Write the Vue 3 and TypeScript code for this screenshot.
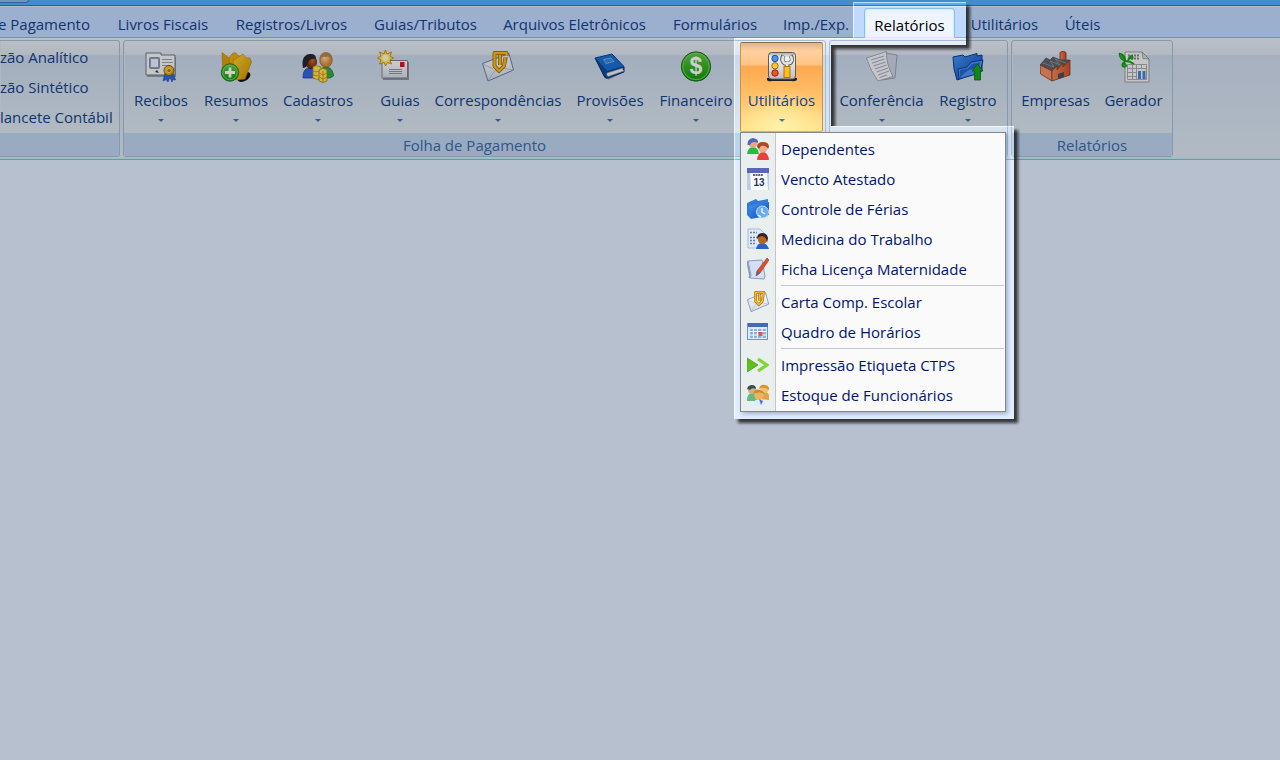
<script setup lang="ts">
import { ref } from 'vue'

interface RibbonButton {
  label: string
  icon: string
  menu: boolean
  mark?: string
}

interface MenuEntry {
  label: string
  icon: string
  mark?: string
}

const tabs: string[] = [
  'e Pagamento',
  'Livros Fiscais',
  'Registros/Livros',
  'Guias/Tributos',
  'Arquivos Eletrônicos',
  'Formulários',
  'Imp./Exp.',
  'Relatórios',
  'Utilitários',
  'Úteis',
]
const activeTab = ref('Relatórios')

const ledgers: string[] = ['zão Analítico', 'zão Sintético', 'lancete Contábil']

const payroll: RibbonButton[] = [
  { label: 'Recibos', icon: 'recibos', menu: true },
  { label: 'Resumos', icon: 'resumos', menu: true },
  { label: 'Cadastros', icon: 'cadastros', menu: true },
  { label: 'Guias', icon: 'guias', menu: true },
  { label: 'Correspondências', icon: 'carta', menu: true },
  { label: 'Provisões', icon: 'livro', menu: true },
  { label: 'Financeiro', icon: 'dinheiro', menu: true, mark: '$' },
  { label: 'Utilitários', icon: 'ferramentas', menu: true },
]
const checks: RibbonButton[] = [
  { label: 'Conferência', icon: 'paginas', menu: true },
  { label: 'Registro', icon: 'registro', menu: true },
]
const reports: RibbonButton[] = [
  { label: 'Empresas', icon: 'fabrica', menu: false },
  { label: 'Gerador', icon: 'gerador', menu: false },
]

const openMenu = ref('Utilitários')

const sections: MenuEntry[][] = [
  [
    { label: 'Dependentes', icon: 'dependentes' },
    { label: 'Vencto Atestado', icon: 'calendario', mark: '13' },
    { label: 'Controle de Férias', icon: 'ferias' },
    { label: 'Medicina do Trabalho', icon: 'medicina' },
    { label: 'Ficha Licença Maternidade', icon: 'ficha' },
  ],
  [
    { label: 'Carta Comp. Escolar', icon: 'carta' },
    { label: 'Quadro de Horários', icon: 'quadro' },
  ],
  [
    { label: 'Impressão Etiqueta CTPS', icon: 'setas' },
    { label: 'Estoque de Funcionários', icon: 'estoque' },
  ],
]

const spotlight = 'M853 2H966V45H831V126H1014V419H734V38H853Z'
</script>

<template>
  <div class="app">
    <svg class="sprite" aria-hidden="true">
      <defs>
        <linearGradient id="gGreen" x1="0" y1="0" x2="0" y2="1"><stop offset="0" stop-color="#66c845" /><stop offset="1" stop-color="#0b9a08" /></linearGradient>
        <linearGradient id="gBlue" x1="0" y1="0" x2="1" y2="1"><stop offset="0" stop-color="#4a9bf2" /><stop offset="1" stop-color="#0b3fbe" /></linearGradient>
        <linearGradient id="gGold" x1="0" y1="0" x2="1" y2="1"><stop offset="0" stop-color="#ffd235" /><stop offset="1" stop-color="#cf8f00" /></linearGradient>
        <linearGradient id="gPaper" x1="0" y1="0" x2="0" y2="1"><stop offset="0" stop-color="#ffffff" /><stop offset="1" stop-color="#d3d9e6" /></linearGradient>
        <linearGradient id="gBrick" x1="0" y1="0" x2="1" y2="0"><stop offset="0" stop-color="#f08a5e" /><stop offset="1" stop-color="#d0502c" /></linearGradient>
        <linearGradient id="gSteel" x1="0" y1="0" x2="0" y2="1"><stop offset="0" stop-color="#a9a9a9" /><stop offset=".2" stop-color="#f4f4f4" /><stop offset="1" stop-color="#bdbdbd" /></linearGradient>
        <radialGradient id="gDark" cx=".65" cy=".4"><stop offset="0" stop-color="#c8662c" /><stop offset="1" stop-color="#7d300d" /></radialGradient>
        <radialGradient id="gSkin" cx=".4" cy=".35"><stop offset="0" stop-color="#ffd6a0" /><stop offset="1" stop-color="#d98a3e" /></radialGradient>
      </defs>

      <symbol id="recibos" viewBox="0 0 32 32">
        <path d="M2 4H17V6H31V26H2Z" fill="#6d747f" opacity=".6" />
        <path d="M1 2H16V4H30V24H1Z" fill="#f4f6f8" stroke="#6f7782" />
        <rect x="4.500" y="6.500" width="10" height="11" rx="1" fill="#8aa0c4" stroke="#7d8fb0" />
        <rect x="6" y="8" width="7" height="8" fill="#eef2f6" />
        <path d="M17 8.500H27M17 11.500H28M17 14.500H25" stroke="#9aa3b1" />
        <path d="M10 21l2-2 2 3z" fill="#333" />
        <path d="M20 22L18 30L21 28.500L23 31L25 26L27 31L28 28.500L30.500 29L28 22Z" fill="#2a6be0" stroke="#1747ab" stroke-width=".6" />
        <circle cx="24" cy="19.500" r="5" fill="url(#gGold)" stroke="#8c5b00" />
        <circle cx="24" cy="19.500" r="2.200" fill="#b87b0e" stroke="#ffe88a" stroke-width=".8" />
      </symbol>

      <symbol id="resumos" viewBox="0 0 32 32">
        <ellipse cx="24" cy="26" rx="7" ry="4" transform="rotate(-30 24 26)" fill="#111" />
        <path d="M2 1.500L9 7L14 12V27L3 24Z" fill="#dda008" stroke="#b87d00" stroke-width=".6" />
        <path d="M9 7L12 3L15 1.500L19 5L24 9L21 28L10 24Z" fill="#e8ad17" stroke="#b87d00" stroke-width=".6" />
        <path d="M13 10L20 5L23 3L26 7H30L31.500 11L25 28L16 29Z" fill="url(#gGold)" stroke="#c08500" stroke-width=".6" />
        <circle cx="10" cy="21.500" r="8.700" fill="url(#gGreen)" stroke="#207d27" />
        <circle cx="10" cy="21.500" r="7.300" fill="none" stroke="#9ddd86" stroke-width=".7" />
        <path d="M10 16.500V26.500M5 21.500H15" stroke="#fff" stroke-width="2.800" />
      </symbol>

      <symbol id="cadastros" viewBox="0 0 32 32">
        <path d="M1 27C1 19 4 17 8 17S14 20 14 27Z" fill="#3465df" stroke="#123aa3" stroke-width=".7" />
        <path d="M18 25C18 18 20 16 24 16S31 19 31.500 25L28 27H19Z" fill="#2fae4b" stroke="#126c26" stroke-width=".7" />
        <ellipse cx="9" cy="11" rx="5.500" ry="6.500" fill="url(#gDark)" stroke="#3b1606" stroke-width=".7" />
        <path d="M1 17C-1 8 3 3 8 3S14 5 14 8C10 7 8 8 6 11C6 14 4 17 1 17Z" fill="#26282d" />
        <ellipse cx="24" cy="9" rx="6.200" ry="7.300" fill="url(#gSkin)" stroke="#8f5a21" stroke-width=".7" />
        <path d="M18 9C17 4 20 1.500 24 1.500S31 4 30 9C28 5 25 5 23 6C21 5 19 6 18 9Z" fill="#b7824d" />
        <path d="M11 16L14 14.500L19 16V27L15 28.500L11 27Z" fill="#ffe15b" stroke="#b98800" stroke-width=".8" />
        <path d="M17 19L21 17L25 19V30L21 31.500L17 30Z" fill="#ffe15b" stroke="#a87a00" stroke-width=".8" />
        <path d="M17 22L21 24L25 22M17 26L21 28L25 26M21 20V31M11 20L14 21L17 20M11 24L16 25" stroke="#c79400" fill="none" stroke-width=".9" />
      </symbol>

      <symbol id="guias" viewBox="0 0 32 32" overflow="visible">
        <path d="M-1 11H25V29H-1Z" fill="#333a45" opacity=".45" />
        <rect x="-2" y="9.500" width="25.500" height="17.500" rx=".5" fill="url(#gPaper)" stroke="#7b7f88" />
        <path d="M5 18.500H18M5 20.500H18M5 22.500H18" stroke="#9096a0" />
        <rect x="16" y="11" width="4.500" height="5" fill="#d8152a" />
        <path d="M1.500-1L3 3L7.500 1L6 5L9.500 7L6 9L7.500 13L3.500 11.500L1.500 15L0 11.500L-4.500 13L-3 9L-6.500 7L-3 5L-4.500 1L0 3Z" fill="#ffe25a" stroke="#c58a0a" stroke-width=".9" />
        <circle cx="1.500" cy="7" r="3.200" fill="#fffad0" />
      </symbol>

      <symbol id="carta" viewBox="0 0 32 32">
        <path d="M.5 12.500L27 2.500L31.500 19L6 30Z" fill="url(#gPaper)" stroke="#697cad" />
        <path d="M1 13L11 18M22 18L27 3M6 29.500L14 18M31 19L20 17" fill="none" stroke="#a7b6d4" stroke-width=".8" />
        <path d="M24.500 5V2H12.500V15L17 20L22 15L23.500 6M18 4V14" fill="none" stroke="#8f6000" stroke-width="3.800" stroke-linejoin="round" />
        <path d="M24.500 5V2H12.500V15L17 20L22 15L23.500 6M18 4V14" fill="none" stroke="#ffb91f" stroke-width="2.400" stroke-linejoin="round" />
      </symbol>

      <symbol id="livro" viewBox="0 0 32 32">
        <path d="M13 25L30 19L28 22L14 29Z" fill="#222" opacity=".35" />
        <path d="M1 7L10 25Q11 28 14 27L30 21V16L14 20Z" fill="#0c4b9c" stroke="#062e68" />
        <path d="M13 22L29 17Q28 19 30 20L14 25.500Q12 24 13 22Z" fill="#f0f1f4" stroke="#8a929f" stroke-width=".6" />
        <path d="M1 7L18 3L30 15.500L13 20.500Z" fill="#1b6fd4" stroke="#084590" />
        <path d="M9.500 8.500L17 7L20 10.500L12 12.500Z" fill="#3a86d8" stroke="#98c7ef" stroke-width=".7" />
      </symbol>

      <symbol id="dinheiro" viewBox="0 0 32 32">
        <circle cx="16" cy="15.500" r="14.700" fill="url(#gGreen)" stroke="#1e6e27" />
        <circle cx="16" cy="15.500" r="13.200" fill="none" stroke="#76cc65" />
      </symbol>

      <symbol id="ferramentas" viewBox="0 0 32 32">
        <path d="M1 27H31V29Q28 31 26 30H6Q2 31 1 29Z" fill="#222" />
        <rect x="2.500" y="1.500" width="27" height="26.500" rx="3" fill="url(#gSteel)" stroke="#5c5c5c" />
        <circle cx="9" cy="7.500" r="3.200" fill="#4f95f0" stroke="#1d4ea6" />
        <circle cx="9" cy="14.800" r="3.200" fill="#ffc62b" stroke="#a66d00" />
        <circle cx="9" cy="22" r="3.200" fill="#f0512d" stroke="#a31f0b" />
        <path d="M17.500 4.500C14 10 19 13.500 21 12.500C25 13 28 9 24.500 4.500M21 12V16" fill="none" stroke="#5f5f5f" stroke-width="4.200" />
        <path d="M17.500 5C14.500 10 19 13.500 21 12C25 13 27.500 9 24.500 5M21 12V16" fill="none" stroke="#e2e2e2" stroke-width="2.600" />
        <rect x="18" y="15.500" width="6" height="11" fill="#ffbd20" stroke="#a86c00" stroke-width=".9" />
      </symbol>

      <symbol id="paginas" viewBox="0 0 32 32">
        <path d="M20 2L31 4L29 27L16 29Z" fill="#ccd1e4" stroke="#8b8fa8" stroke-width=".8" />
        <path d="M.5 7Q10 4 20.500.5Q20 13 27 25.500L12 30Q4 19 .5 7Z" fill="#f5f5fa" stroke="#9598ac" stroke-width=".8" />
        <path d="M5 9L18 5M6 12L18.500 8M7.500 15L19.500 11M9 18L20.500 14M10.500 21L22 17M12 24L23 20M13.500 26.500L21 24" stroke="#a9aec6" stroke-width="1.300" />
      </symbol>

      <symbol id="registro" viewBox="0 0 32 32">
        <path d="M1 6L11 4L13 6L25 2.500V5L30 4V20L5 29Q1 18 1 6Z" fill="url(#gBlue)" stroke="#0e399b" />
        <path d="M6 18L15 16L19 11L31 9L28 22L7 28Z" fill="#4a95ed" stroke="#103b9e" />
        <path d="M8 19L16 17.500L20 13L28 11.500L26 18Q16 16 8 27Z" fill="#2464d2" />
        <path d="M25.500 13L31 20H28.500V29H22.500V20H20Z" fill="#16a51c" stroke="#08720d" stroke-width=".8" />
      </symbol>

      <symbol id="fabrica" viewBox="0 0 32 32">
        <path d="M20 1.500Q23-1 26 1.500V12H20Z" fill="url(#gBrick)" stroke="#8e2c10" stroke-width=".8" />
        <path d="M0 14L6 7L10 9L13 6L18 8L21 9L30 9L28 14L12 22Z" fill="#5f6265" stroke="#444" stroke-width=".6" />
        <path d="M3 12L14 16L10 10L20 14L15 8L26 12" stroke="#8c9094" stroke-width="1" fill="none" />
        <path d="M0 14L12 20V30L.5 23Z" fill="#f0906a" stroke="#9c3717" stroke-width=".8" />
        <path d="M12 20L17 15V19L23 12V16L30 9V24L12 30Z" fill="url(#gBrick)" stroke="#9c3717" stroke-width=".8" />
        <path d="M18 23L24 21V26L18 28Z" fill="#4c4f51" />
      </symbol>

      <symbol id="gerador" viewBox="0 0 32 32">
        <path d="M7 1H24L31 8V31H7Z" fill="#f3f4f4" stroke="#9a9da2" />
        <path d="M24 1L25 7.500L31 8Z" fill="#d6d8da" stroke="#84888e" stroke-width=".7" />
        <path d="M10 4.500H22M10 7.500H22" stroke="#888" stroke-width="2" stroke-dasharray="2 1" />
        <path d="M9.500 13.500H28.500M9.500 17.500H28.500M9.500 21.500H19M9.500 25.500H19M9.500 28.500H28.500M9.500 13.500V28.500M14.500 13.500V28.500M18.500 13.500V28.500M23.500 13.500V18M28.500 13.500V28.500" stroke="#a9abaf" fill="none" />
        <path d="M20 20H23V28H20ZM24.500 20H27.500V28H24.500Z" fill="#4b84dd" />
        <path d="M1 3Q7 3 7 10Q12 10 16 13M7 11Q4 12 5 16M10 11Q10 6 15 5" fill="none" stroke="#18a51b" stroke-width="2" />
        <path d="M1 2Q6 3 7 10Q1 9 1 2ZM4 13Q8 11 9 15Q6 18 4 15ZM12 5Q16 4 15 8Q11 9 12 5Z" fill="#1cb524" stroke="#08720d" stroke-width=".5" />
      </symbol>

      <symbol id="dependentes" viewBox="0 0 22 22">
        <path d="M0 16Q1 9 6 9T12 16Z" fill="#20bf3f" />
        <circle cx="6" cy="5.500" r="4.300" fill="#e9a682" />
        <path d="M.5 7Q0 1 6 0Q12 1 11 5Q5 2 3 7Z" fill="#5464bd" />
        <path d="M10 22Q11 14 16 14T22 22Z" fill="#ed3e3e" />
        <circle cx="16" cy="10" r="4.600" fill="#efad8b" />
        <path d="M10 9Q10 4 16 4T22 9L21 11Q19 7 14 8L12 11Z" fill="#a9482b" />
      </symbol>

      <symbol id="calendario" viewBox="0 0 22 22">
        <rect width="22" height="22" fill="#bacbed" />
        <rect width="22" height="5" fill="#5b65b9" />
        <path d="M3 5H20L21 22H4Z" fill="#fbfcff" />
        <path d="M6 7H16" stroke="#5c6686" stroke-width="2" stroke-dasharray="2 .6" />
      </symbol>

      <symbol id="ferias" viewBox="0 0 22 22">
        <path d="M0 5L9 1L11 3L21 1V18L4 21L0 17Z" fill="#2f7bd6" />
        <path d="M2 8L22 4V17L4 20Z" fill="url(#gBlue)" />
        <circle cx="15.500" cy="14" r="6" fill="#65adf0" stroke="#bfdefa" />
        <path d="M15 10V14L18 16M11 17L14 19" stroke="#eaf6ff" stroke-width="1.500" fill="none" />
      </symbol>

      <symbol id="medicina" viewBox="0 0 22 22">
        <path d="M1 1H13L17 5V20H1Z" fill="#dfe9f8" stroke="#a9bbd8" />
        <path d="M3 4.500H10M3 9.500H10M3 12.500H9M3 15.500H9" stroke="#5d7fb2" stroke-width="1.600" stroke-dasharray="2 1" />
        <path d="M9 21Q10 15 15 15T22 21Z" fill="#2861c8" />
        <circle cx="15.500" cy="11" r="4.800" fill="#b86321" />
        <path d="M10 11Q10 5 15 5T21 10L20 15Q20 9 15 8Q12 8 10 11Z" fill="#32221c" />
      </symbol>

      <symbol id="ficha" viewBox="0 0 22 22">
        <path d="M1 3L15 2L18 18L17 21L3 20L4 17Z" fill="#d3dff3" stroke="#8b9dc2" />
        <path d="M0 3L3 18L2 20" fill="none" stroke="#8498c0" stroke-width="1.500" />
        <path d="M20 0L22 2L13 15L9 18L10 13Z" fill="#e44b2c" stroke="#9c2c1a" stroke-width=".6" />
        <path d="M10 13L9 18L13 15Z" fill="#5b6684" />
      </symbol>

      <symbol id="quadro" viewBox="0 0 22 22">
        <rect x=".5" y="2.500" width="20" height="16" fill="#dbe8fb" stroke="#7491c9" />
        <rect x="1" y="2" width="20" height="4" fill="#4768b8" />
        <path d="M3 8H19V17H3Z" fill="#8db2ea" />
        <path d="M2 10.500H20M2 14H20M6.500 7V18M10.500 7V18M15 7V18" stroke="#f4f8ff" />
        <rect x="11.500" y="11" width="4" height="4" fill="#df594d" />
      </symbol>

      <symbol id="setas" viewBox="0 0 22 22">
        <path d="M0 4L11 11L0 18Z" fill="#60c01f" stroke="#55ab1f" />
        <path d="M11 5L20 11L11 17" fill="none" stroke="#7ed534" stroke-width="3.200" />
      </symbol>

      <symbol id="estoque" viewBox="0 0 22 22">
        <path d="M0 17Q0 9 5 9T11 17Z" fill="#64ba80" />
        <path d="M12 15Q13 8 18 8T22 16Z" fill="#dfa34d" />
        <circle cx="5" cy="6" r="4" fill="#d8af7b" />
        <path d="M0 5Q1 1 5 1T9 5Q5 3 3 6Z" fill="#384e50" />
        <circle cx="17.500" cy="5" r="4.200" fill="#f0bf70" />
        <path d="M12 5Q13 0 18 1T22 6Q17 2 12 5Z" fill="#d6952d" />
        <path d="M6 21Q7 15 12 15T18 20L14 22Z" fill="#dfeaff" />
        <circle cx="12" cy="11" r="4.800" fill="#edb459" />
        <path d="M6 10Q8 4 13 6T18 10Q12 7 6 10Z" fill="#c98c31" />
        <path d="M12 15L14 21L16 17Z" fill="#4a76d2" />
      </symbol>
    </svg>

    <header class="titlebar"><span class="orb"></span></header>

    <nav class="tabs" aria-label="Guias da faixa">
      <button
        v-for="tab in tabs"
        :key="tab"
        type="button"
        class="tab"
        :class="{ active: tab === activeTab }"
        @click="activeTab = tab"
      >
        <span>{{ tab }}</span>
      </button>
    </nav>

    <div class="ribbon">
      <section class="group ledgers">
        <div class="stack">
          <button v-for="item in ledgers" :key="item" type="button" class="line">{{ item }}</button>
        </div>
        <div class="caption"></div>
      </section>

      <section class="group">
        <div class="buttons payroll">
          <div v-for="item in payroll" :key="item.label" class="slot">
            <button
              type="button"
              class="tool"
              :class="{ open: item.label === openMenu }"
              @click="openMenu = openMenu === item.label ? '' : item.label"
            >
              <svg class="icon" viewBox="0 0 32 32">
                <use :href="'#' + item.icon" />
                <text v-if="item.mark" x="16" y="23" class="currency">{{ item.mark }}</text>
              </svg>
              <span>{{ item.label }}</span>
              <i v-if="item.menu" class="arrow"></i>
            </button>
            <div v-if="item.label === 'Utilitários' && openMenu === item.label" class="menu">
              <div v-for="(section, i) in sections" :key="i" class="section">
                <button v-for="entry in section" :key="entry.label" type="button" class="entry">
                  <svg class="small" viewBox="0 0 22 22">
                    <use :href="'#' + entry.icon" />
                    <text v-if="entry.mark" x="12" y="18" class="day">{{ entry.mark }}</text>
                  </svg>
                  <span>{{ entry.label }}</span>
                </button>
              </div>
            </div>
          </div>
        </div>
        <div class="caption">Folha de Pagamento</div>
      </section>

      <section class="group">
        <div class="buttons checks">
          <button v-for="item in checks" :key="item.label" type="button" class="tool">
            <svg class="icon"><use :href="'#' + item.icon" /></svg>
            <span>{{ item.label }}</span>
            <i class="arrow"></i>
          </button>
        </div>
        <div class="caption"></div>
      </section>

      <section class="group">
        <div class="buttons reports">
          <button v-for="item in reports" :key="item.label" type="button" class="tool">
            <svg class="icon"><use :href="'#' + item.icon" /></svg>
            <span>{{ item.label }}</span>
          </button>
        </div>
        <div class="caption">Relatórios</div>
      </section>
    </div>

    <svg class="dim" aria-hidden="true">
      <defs>
        <filter id="soft" x="-5%" y="-5%" width="110%" height="110%"><feGaussianBlur stdDeviation="1.500" /></filter>
        <mask id="outside" maskUnits="userSpaceOnUse" x="0" y="0" width="100%" height="100%">
          <rect width="100%" height="100%" fill="#fff" />
          <path :d="spotlight" fill="#000" />
        </mask>
      </defs>
      <g mask="url(#outside)">
        <rect width="100%" height="100%" fill="#000" fill-opacity=".193" />
        <path :d="spotlight" transform="translate(4 4)" fill="#0c0f14" fill-opacity=".78" filter="url(#soft)" />
      </g>
      <path d="M853.500 38V2.500H966M734.500 419V38.500H853M831 126.500H1014" fill="none" stroke="#fff" stroke-opacity=".6" />
    </svg>
  </div>
</template>

<style>
html,
body,
#app {
  height: 100%;
}
body {
  margin: 0;
  background: #e3eeff;
}
</style>

<style scoped>
.app {
  position: relative;
  min-height: 100%;
  overflow: hidden;
  background: #e3eeff;
  font-family: "Open Sans", "Noto Sans", sans-serif;
  font-size: 15px;
  line-height: 20px;
  color: #15428b;
}
.sprite {
  position: absolute;
  width: 0;
  height: 0;
}
button {
  margin: 0;
  padding: 0;
  border: 0;
  background: none;
  font: inherit;
  color: inherit;
  white-space: nowrap;
  cursor: pointer;
}
.titlebar {
  box-sizing: border-box;
  height: 7px;
  overflow: hidden;
  background: #51aefc;
  border-bottom: 1px solid #dde8f5;
  box-shadow: inset 0 -1px #3c76b4;
}
.orb {
  display: block;
  width: 28px;
  height: 2px;
  background: #87bcec;
  border: solid #427fb9;
  border-width: 0 1px 1px 0;
  border-radius: 0 0 12px 0;
}
.tabs {
  display: grid;
  grid-template-columns: 104px 118px 139px 129px 169px 112px 90px 97px 93px 63px;
  height: 30px;
  background: #c0daff;
  border-bottom: 1px solid #8fb2e0;
}
.tab {
  display: flex;
  align-items: center;
  justify-content: center;
  padding-top: 4px;
}
.tab:first-child {
  justify-content: flex-end;
  padding-right: 14px;
}
.tab.active {
  margin: 1px 3px -1px;
  padding-top: 2px;
  border: 1px solid #8fbdf0;
  border-bottom: 0;
  border-radius: 4px 4px 0 0;
  background: linear-gradient(#e8f1fd, #f2f7fe 50%, #ebf2fc);
  box-shadow: inset 0 0 0 1px #cdf0ff;
  color: #000;
}
.ribbon {
  display: flex;
  gap: 3px;
  box-sizing: border-box;
  height: 122px;
  padding-top: 2px;
  background: linear-gradient(#e9eef8, #dce5f2 17px, #cedbee 17px, #dce7f3 100%);
  border-bottom: 1px solid #95b5cc;
  box-shadow: inset 0 -1px #bdeef1;
}
.group {
  box-sizing: border-box;
  height: 117px;
  border: 1px solid #a6bdd4;
  border-radius: 3px;
  background: linear-gradient(#e8edf5, #dce5f0 14px, #c9d8eb 14px, #dce7f1 92px);
  box-shadow: inset 1px 0 #d9e6f4;
}
.ledgers {
  width: 120px;
  border-left: 0;
  border-radius: 0 3px 3px 0;
}
.stack {
  display: flex;
  flex-direction: column;
  align-items: flex-start;
  height: 91px;
  padding-top: 1px;
}
.line {
  height: 30px;
}
.buttons {
  display: grid;
  height: 90px;
  padding: 1px 2px;
}
.payroll {
  grid-template-columns: 70px 80px 84px 68px 140px 84px 88px 83px;
}
.checks {
  grid-template-columns: 99px 74px;
}
.reports {
  grid-template-columns: 83px 73px;
}
.caption {
  height: 23px;
  line-height: 24px;
  background: #bdd4ef;
  color: #3e6aaa;
  text-align: center;
}
.slot {
  position: relative;
}
.tool {
  display: flex;
  flex-direction: column;
  align-items: center;
  box-sizing: border-box;
  width: 100%;
  height: 90px;
  padding-top: 9px;
}
.slot:nth-child(4) .tool {
  padding-left: 12px;
}
.icon {
  width: 32px;
  height: 32px;
  margin-bottom: 7px;
  overflow: visible;
}
.currency {
  font: 700 23px/1 "Liberation Sans", sans-serif;
  text-anchor: middle;
  fill: #fff;
}
.day {
  font: 700 10px/1 "Liberation Sans", sans-serif;
  text-anchor: middle;
  fill: #28345f;
}
.arrow {
  margin-top: 9px;
  border: 3px solid transparent;
  border-top-color: #4670ae;
  border-bottom: 0;
}
.tool.open {
  padding-top: 8px;
  border: 1px solid #c9963d;
  border-top-color: #8e6d43;
  border-bottom-color: #f0b93f;
  border-radius: 2px;
  background:
    radial-gradient(ellipse 60% 50% at 50% 100%, #fff3ab, transparent),
    linear-gradient(#dcb48a, #ffd0a0 8px, #ffc384 22px, #ffa850 23px, #ffc067 60%, #ffe38c);
}
.menu {
  position: absolute;
  z-index: 2;
  top: 90px;
  left: 0;
  box-sizing: border-box;
  width: 266px;
  padding: 1px;
  border: 1px solid #868686;
  background: linear-gradient(90deg, #e9eeee 34px, #c5c5c5 34px, #c5c5c5 35px, #fafafa 35px);
  box-shadow: 2px 2px 4px #667a9c88;
  color: #00156e;
}
.section + .section {
  padding-top: 2px;
  background: linear-gradient(#c5c5c5, #c5c5c5) 39px 0 / 100% 1px no-repeat;
  border-top: 1px solid transparent;
}
.entry {
  display: flex;
  align-items: center;
  gap: 12px;
  width: 100%;
  height: 30px;
  padding-left: 5px;
}
.small {
  width: 22px;
  height: 22px;
}
.dim {
  position: absolute;
  z-index: 3;
  inset: 0;
  width: 100%;
  height: 100%;
  pointer-events: none;
}
</style>
